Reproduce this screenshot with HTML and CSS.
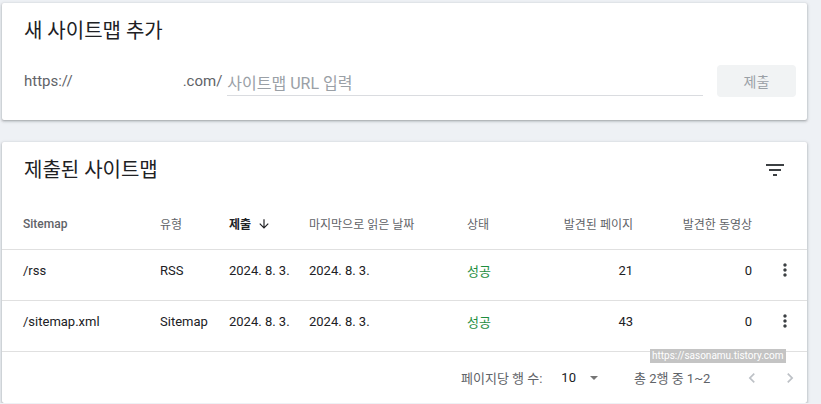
FILE: index.html
```html
<!DOCTYPE html>
<html lang="ko">
<head>
  <meta charset="UTF-8" />
  <title>Sitemaps</title>
  <link rel="stylesheet" href="styles.css">
</head>
<body>
  <div class="page">
    <div class="card add-card">
      <h2 class="card-title">새 사이트맵 추가</h2>
      <div class="add-row">
        <span class="prefix">https://</span><span class="domain"></span><span class="prefix">.com/</span>
        <div class="url-input">사이트맵 URL 입력</div>
        <button class="submit-btn">제출</button>
      </div>
    </div>

    <div class="card list-card">
      <div class="list-head">
        <h2 class="card-title">제출된 사이트맵</h2>
        <svg class="icon filter" viewBox="0 0 24 24"><path d="M10 18h4v-2h-4v2zM3 6v2h18V6H3zm3 7h12v-2H6v2z"/></svg>
      </div>

      <div class="row head">
        <div>Sitemap</div>
        <div>유형</div>
        <div class="sorted">제출
          <svg class="sort-arrow" viewBox="0 0 24 24"><path d="M20 12l-1.41-1.41L13 16.17V4h-2v12.17l-5.58-5.59L4 12l8 8 8-8z"/></svg>
        </div>
        <div>마지막으로 읽은 날짜</div>
        <div>상태</div>
        <div class="num">발견된 페이지</div>
        <div class="num">발견한 동영상</div>
        <div></div>
      </div>

      <div class="row">
        <div>/rss</div>
        <div>RSS</div>
        <div>2024. 8. 3.</div>
        <div>2024. 8. 3.</div>
        <div class="ok">성공</div>
        <div class="num">21</div>
        <div class="num">0</div>
        <div><svg class="icon kebab" viewBox="0 0 24 24"><path d="M12 8c1.1 0 2-.9 2-2s-.9-2-2-2-2 .9-2 2 .9 2 2 2zm0 2c-1.1 0-2 .9-2 2s.9 2 2 2 2-.9 2-2-.9-2-2-2zm0 6c-1.1 0-2 .9-2 2s.9 2 2 2 2-.9 2-2-.9-2-2-2z"/></svg></div>
      </div>

      <div class="row">
        <div>/sitemap.xml</div>
        <div>Sitemap</div>
        <div>2024. 8. 3.</div>
        <div>2024. 8. 3.</div>
        <div class="ok">성공</div>
        <div class="num">43</div>
        <div class="num">0</div>
        <div><svg class="icon kebab" viewBox="0 0 24 24"><path d="M12 8c1.1 0 2-.9 2-2s-.9-2-2-2-2 .9-2 2 .9 2 2 2zm0 2c-1.1 0-2 .9-2 2s.9 2 2 2 2-.9 2-2-.9-2-2-2zm0 6c-1.1 0-2 .9-2 2s.9 2 2 2 2-.9 2-2-.9-2-2-2z"/></svg></div>
      </div>

      <div class="pager">
        <span class="pager-label">페이지당 행 수:</span>
        <span class="per-page">10</span>
        <span class="caret"></span>
        <span class="range">총 2행 중 1~2</span>
        <svg class="icon nav prev" viewBox="0 0 24 24"><path d="M15.41 7.41L14 6l-6 6 6 6 1.41-1.41L10.83 12z"/></svg>
        <svg class="icon nav next" viewBox="0 0 24 24"><path d="M10 6L8.59 7.41 13.17 12l-4.58 4.59L10 18l6-6z"/></svg>
      </div>

      <div class="watermark">https://sasonamu.tistory.com</div>
    </div>
  </div>
</body>
</html>
```

FILE: styles.css
```css
body {
  margin: 0;
  background-color: #eef1f5;
  font-family: Roboto, "Noto Sans CJK KR", sans-serif;
  color: #202124;
}
.page {
  padding: 3px 14px 0 2px;
}
.card {
  background-color: #fff;
  border-radius: 2px;
  box-shadow: 0 1px 2px rgba(60, 64, 67, 0.3), 0 1px 3px 1px rgba(60, 64, 67, 0.15);
}
.card-title {
  margin: 0;
  font-size: 20px;
  font-weight: 400;
  line-height: 28px;
  color: #202124;
}
.icon {
  fill: #5f6368;
}

/* add sitemap */
.add-card {
  height: 117px;
  padding: 14px 11px 0 22px;
  box-sizing: border-box;
}
.add-row {
  display: flex;
  align-items: center;
  margin-top: 20px;
}
.prefix {
  font-size: 15px;
  color: #5f6368;
}
.domain {
  display: inline-block;
  width: 110px;
}
.url-input {
  flex: 1;
  height: 30px;
  padding-top: 6px;
  margin-left: 5px;
  box-sizing: border-box;
  border-bottom: 1px solid #dadce0;
  font-size: 16px;
  line-height: 24px;
  color: #9aa0a6;
}
.submit-btn {
  width: 79px;
  height: 32px;
  margin-left: 14px;
  border: none;
  border-radius: 4px;
  background-color: #f1f3f4;
  color: #9aa0a6;
  font-family: inherit;
  font-size: 14px;
}

/* submitted sitemaps */
.list-card {
  position: relative;
  margin-top: 22px;
}
.list-head {
  display: flex;
  align-items: center;
  justify-content: space-between;
  height: 56px;
  padding: 0 20px 0 22px;
}
.filter {
  width: 24px;
  height: 24px;
  fill: #3c4043;
}
.row {
  display: grid;
  grid-template-columns: 137px 69px 80px 158px 73px 93px 119px 1fr;
  align-items: center;
  height: 51px;
  padding-left: 21px;
  padding-bottom: 10px;
  box-sizing: border-box;
  border-bottom: 1px solid #e0e0e0;
  font-size: 13px;
  color: #202124;
}
.row.head {
  height: 52px;
  padding-bottom: 0;
  font-size: 12px;
  color: #5f6368;
}
.row.head > div:first-child {
  font-weight: 500;
}
.sorted {
  display: flex;
  align-items: center;
  font-weight: 700;
  color: #202124;
}
.sort-arrow {
  width: 14px;
  height: 14px;
  margin-left: 6px;
  fill: #202124;
}
.num {
  text-align: right;
}
.ok {
  color: #1e8e3e;
}
.kebab {
  display: block;
  width: 20px;
  height: 20px;
  margin-left: 23px;
  fill: #3c4043;
}

.pager {
  display: flex;
  align-items: center;
  height: 51px;
  padding-left: 459px;
  font-size: 13px;
  color: #5f6368;
}
.per-page {
  margin-left: 19px;
  font-size: 13px;
  color: #202124;
}
.caret {
  width: 0;
  height: 0;
  margin-left: 14px;
  border-left: 4px solid transparent;
  border-right: 4px solid transparent;
  border-top: 4px solid #757575;
}
.range {
  margin-left: 36px;
}
.nav {
  width: 20px;
  height: 20px;
  fill: #bdc1c6;
}
.prev {
  margin-left: 32px;
}
.next {
  margin-left: 18px;
}

.watermark {
  position: absolute;
  left: 648px;
  top: 207px;
  padding: 0 2px;
  background-color: #c4c4c4;
  color: #fff;
  font-size: 10px;
  line-height: 14px;
}
```
